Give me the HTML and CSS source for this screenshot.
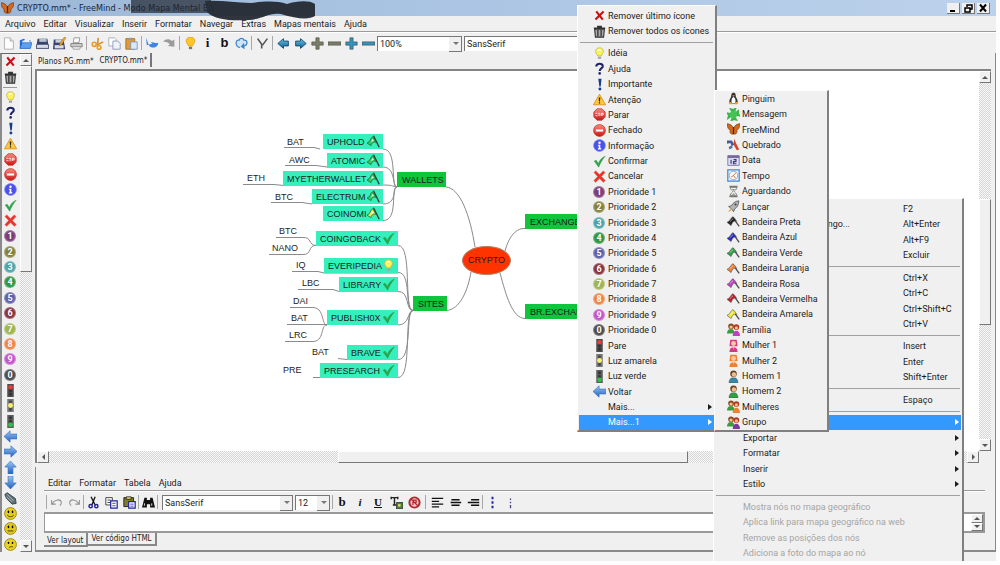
FILE: index.html
```html
<!DOCTYPE html>
<html lang="pt-BR">
<head>
    <meta charset="UTF-8">
    <meta name="viewport" content="width=device-width, initial-scale=1.0">
    <title>CRYPTO.mm* - FreeMind</title>
    <link rel="stylesheet" href="styles.css">
</head>
<body>
    <!-- Icon sprite -->
    <svg class="sprite" aria-hidden="true">
        <defs>
            <linearGradient id="gBlue" x1="0" y1="0" x2="0" y2="1"><stop offset="0" stop-color="#9cc8f4"/><stop offset="1" stop-color="#1f5fc0"/></linearGradient>
            <linearGradient id="gTeal" x1="0" y1="0" x2="0" y2="1"><stop offset="0" stop-color="#6cc6e8"/><stop offset="1" stop-color="#0f5f90"/></linearGradient>
            <linearGradient id="gRed" x1="0" y1="0" x2="0" y2="1"><stop offset="0" stop-color="#f98a80"/><stop offset="1" stop-color="#cc1414"/></linearGradient>
            <symbol id="remove" viewBox="0 0 16 16"><path d="M4 3l8 10M13 3L3 13" stroke="#c41212" stroke-width="2.6" fill="none"/></symbol>
            <symbol id="trash" viewBox="0 0 16 16"><path d="M1 4h14M5 2h6" stroke="#333" stroke-width="2"/><path d="M2 5h12l-1 10H3z" fill="#aaa" stroke="#333" stroke-width="1.400"/><path d="M6 6v8M10 6v8" stroke="#222" stroke-width="1.400"/></symbol>
            <symbol id="bulb" viewBox="0 0 16 16"><path d="M8 1C4.500 1 3 3.500 3.200 5.800 3.500 8 5.500 9 5.600 11h4.800c.1-2 2.200-3 2.400-5.200C13 3.500 11.500 1 8 1z" fill="#fbf35a" stroke="#c3b54a"/><path d="M6 4.500c1-1.500 3-1.500 3.500-.5" stroke="#fff" stroke-width="1.500" fill="none"/><path d="M6 12h4v2.500H6z" fill="#a5a5a5"/></symbol>
            <symbol id="bulb-orange" viewBox="0 0 16 16"><path d="M8 0C4 0 2.500 3 2.800 5.500 3 8 5.300 9 5.500 11h5c.2-2 2.500-3 2.700-5.500C13.500 3 12 0 8 0z" fill="#ffc629" stroke="#e09a10"/><path d="M6 12h4v3H6z" fill="#777"/></symbol>
            <symbol id="question" viewBox="0 0 16 16"><path d="M4 5.500C4 1 12.500 1 12 5.500 11.500 8 8.500 7.500 8.300 11" stroke="#1d2369" stroke-width="2.600" fill="none"/><circle cx="8.200" cy="14" r="1.600" fill="#1d2369"/></symbol>
            <symbol id="bang" viewBox="0 0 16 16"><path d="M6.500 1h4l-1 9.500H7.800z" fill="#173d86"/><circle cx="8.500" cy="13.600" r="1.800" fill="#173d86"/></symbol>
            <symbol id="warn" viewBox="0 0 16 16"><path d="M8 1.500L15.500 14.500H.5z" fill="#ffc83a" stroke="#d88b12"/><path d="M7 5.500h2l-.4 5H7.400zM7.200 11.500h1.600V13H7.200z" fill="#222"/></symbol>
            <symbol id="stop" viewBox="0 0 16 16"><path d="M5 1h6l4 4v6l-4 4H5l-4-4V5z" fill="url(#gRed)" stroke="#c33"/><path d="M3 6.500h2.500M3 9.500h2.500M6.500 6.500h2M7.500 6.500v3.500M10 9.800V6.500h2.500v2H10" stroke="#fff" fill="none"/></symbol>
            <symbol id="closed" viewBox="0 0 16 16"><circle cx="8" cy="8" r="7.300" fill="url(#gRed)" stroke="#d43a30"/><path d="M3.500 6.700h9v2.600h-9z" fill="#fff"/></symbol>
            <symbol id="info" viewBox="0 0 16 16"><circle cx="8" cy="8" r="7.300" fill="#4a50ee" stroke="#8b90ee"/><circle cx="8" cy="4.500" r="1.500" fill="#fff"/><path d="M6 7h3v4.500h1.200V13H6v-1.500h1V8.300H6z" fill="#fff"/></symbol>
            <symbol id="check" viewBox="0 0 16 16"><path d="M1.500 7.500L4 6.500l2.500 4C8.500 6 11 3 15 1.500 11.500 5.500 9 10 7 15z" fill="#2fa84a" stroke="#1b8a38" stroke-width=".5"/></symbol>
            <symbol id="cancel" viewBox="0 0 16 16"><path d="M1 3l2.500-2L8 5.500 12.500 1 15 3.200 10.500 8l4.800 5-2.500 2.500L8 10.800 3.200 15.500 1 13l4.500-5z" fill="#e6352c" stroke="#f08a80" stroke-width=".6"/></symbol>
            <symbol id="light-red" viewBox="0 0 16 16"><path d="M4 0h8v16H4z" fill="#4c4c4c"/><circle cx="8" cy="4" r="2.800" fill="#f03a3a"/><circle cx="8" cy="8.500" r="1.800" fill="#333"/><circle cx="8" cy="12.500" r="1.800" fill="#333"/></symbol>
            <symbol id="light-yellow" viewBox="0 0 16 16"><path d="M4 0h8v16H4z" fill="#777"/><circle cx="8" cy="3.500" r="1.800" fill="#444"/><circle cx="8" cy="8" r="3" fill="#f7f06a"/><circle cx="8" cy="12.800" r="1.800" fill="#444"/></symbol>
            <symbol id="light-green" viewBox="0 0 16 16"><path d="M4 0h8v16H4z" fill="#5c5c5c"/><circle cx="8" cy="3.500" r="1.800" fill="#333"/><circle cx="8" cy="8" r="1.800" fill="#333"/><circle cx="8" cy="12" r="2.900" fill="#35c04a"/></symbol>
            <symbol id="arrow-left" viewBox="0 0 16 16"><path d="M0 8l7.500-7v4H16v6H7.500v4z" fill="url(#gBlue)" stroke="#3a72bd" stroke-width=".8"/></symbol>
            <symbol id="arrow-right" viewBox="0 0 16 16"><path d="M16 8L8.500 1v4H0v6h8.500v4z" fill="url(#gBlue)" stroke="#3a72bd" stroke-width=".8"/></symbol>
            <symbol id="arrow-up" viewBox="0 0 16 16"><path d="M8 0l7 7.500h-4V16H5V7.500H1z" fill="url(#gBlue)" stroke="#3a72bd" stroke-width=".8"/></symbol>
            <symbol id="arrow-down" viewBox="0 0 16 16"><path d="M8 16l7-7.500h-4V0H5v8.500H1z" fill="url(#gBlue)" stroke="#3a72bd" stroke-width=".8"/></symbol>
            <symbol id="pencil" viewBox="0 0 16 16"><path d="M1 3l3-2 10 7 1 6-5 1L3 8z" fill="#5f7075" stroke="#2c3b40"/><path d="M4 3l8 8M3 6l7 6" stroke="#b9cccf"/></symbol>
            <symbol id="smile" viewBox="0 0 16 16"><circle cx="8" cy="8" r="7.300" fill="#e6cf1e" stroke="#8f7f0c"/><ellipse cx="5.500" cy="6" rx="1" ry="1.600"/><ellipse cx="10.500" cy="6" rx="1" ry="1.600"/><path d="M4 10c2 2.500 6 2.500 8 0" stroke="#222" fill="none"/></symbol>
            <symbol id="neutral" viewBox="0 0 16 16"><circle cx="8" cy="8" r="7.300" fill="#e0c91c" stroke="#8f7f0c"/><ellipse cx="5.500" cy="6" rx="1" ry="1.600"/><ellipse cx="10.500" cy="6" rx="1" ry="1.600"/><path d="M4.500 11h7" stroke="#222" fill="none"/></symbol>
            <symbol id="sad" viewBox="0 0 16 16"><circle cx="8" cy="8" r="7.300" fill="#e9d222" stroke="#8f7f0c"/><ellipse cx="5.500" cy="6" rx="1" ry="1.300"/><ellipse cx="10.500" cy="6" rx="1" ry="1.300"/><path d="M6 12c1-1 3-2 5-1" stroke="#222" fill="none"/></symbol>
            <symbol id="penguin" viewBox="0 0 16 16"><path d="M8 1c-3 0-2.500 3-3 5C3.500 8.500 2 11 3.500 14h9C14 11 12.500 8.500 11 6c-.5-2 0-5-3-5z" fill="#333"/><path d="M8 6c-2.500 1-3 5-2 7.500h4C11 11 10.500 7 8 6z" fill="#fff"/><path d="M6.500 4h3L8 6zM2 13l3-1 2 3H3zM14 13l-3-1-2 3h4z" fill="#f0a020"/></symbol>
            <symbol id="clover" viewBox="0 0 16 16"><path d="M8 8L4 1l4 1 3-2zM8 8l6-5v4l2 3zM8 8l4 7-4-1-3 2zM8 8l-7 5 1-4-2-3z" fill="#3bb54a" stroke="#3bb54a" stroke-width="1.500"/><circle cx="8" cy="8" r="4.500" fill="#45c455"/></symbol>
            <symbol id="butterfly" viewBox="0 0 16 16"><path d="M0 1c4 0 6 2 8 5 2-3 4-5 8-5-.5 5-2 7-4 8 1 3-1 6-4 4-3 2-5-1-4-4C2 8 .5 6 0 1z" fill="#d2691e" stroke="#7d3208" stroke-width=".8"/><path d="M8 5v9" stroke="#5a2408" stroke-width="1.600"/></symbol>
            <symbol id="broken" viewBox="0 0 16 16"><path d="M0 3h6l3 5-3 2-2-4-4 1z" fill="#3f5f9f"/><path d="M9 1l2 5 4 8-3 1-4-7z" fill="#d8422c"/><path d="M2 11l4-2 1 3-4 2z" fill="#56719f"/></symbol>
            <symbol id="calendar" viewBox="0 0 16 16"><path d="M1 2h14v12H1z" fill="#dfe0f4" stroke="#6a6a9c"/><path d="M1 2h14v3H1z" fill="#7a6a9c"/><path d="M5 7v5M8 7h3v2.500H8V12h3.500" stroke="#3b3b7c" stroke-width="1.500" fill="none"/></symbol>
            <symbol id="clock" viewBox="0 0 16 16"><path d="M1 1h14v14H1z" fill="#e8f2fc" stroke="#3f86d0" stroke-width="1.500"/><circle cx="8" cy="8" r="5" fill="#fff" stroke="#999"/><path d="M11 4.500L8 8l2.500 3.500M5 10l3-2" stroke="#b0522c" fill="none"/></symbol>
            <symbol id="hourglass" viewBox="0 0 16 16"><path d="M3 1h10v2H3zM3 13h10v2H3z" fill="#777"/><path d="M4 3h8c0 3-3 4-3 5s3 2 3 5H4c0-3 3-4 3-5S4 6 4 3z" fill="#eee" stroke="#777"/><path d="M6 5h4L8 7.500zM5.500 12L8 10l2.500 2z" fill="#998e6c"/></symbol>
            <symbol id="rocket" viewBox="0 0 16 16"><path d="M14.500 1C10 1.500 7 4 5.500 7L2 8l2 1.500L6.500 12 8 14.500 9.500 11C12.500 9 14.500 6 14.500 1z" fill="#b4b4b4" stroke="#555"/><circle cx="10.500" cy="5.500" r="1.300" fill="#444"/><path d="M1 15l3-4 1.500 1.500z" fill="#e59a30"/></symbol>
            <symbol id="flag" viewBox="0 0 16 16"><path d="M7 3l8 11" stroke="#4b4b4b" stroke-width="1.600"/><path d="M7 2c2 1 3 3 5 6-3-1.500-5 0-7 5L0 9c3-1 4-4 7-7z" fill="currentColor" stroke="#555" stroke-width=".8"/><path d="M3.500 8.500c1.500-1 2-3 4-4" stroke="#fff" fill="none" opacity=".6"/></symbol>
            <symbol id="node-flag" viewBox="0 0 16 16"><path d="M8 1l7 14" stroke="#333" stroke-width="1.600"/><path d="M7 2l4 7c-3-1-5 0-6 4L0 10c4-1 4-6 7-8z" fill="currentColor" stroke="#1b6a30"/><path d="M4.500 9.500c1-1 2-2 4-2L7 5C6 6 5.500 8 4.500 9.500z" fill="#e5fff0"/></symbol>
            <symbol id="woman" viewBox="0 0 16 16"><path d="M4 1h8l1 8H3z" fill="currentColor"/><circle cx="8" cy="5.500" r="3" fill="#f5c9a0"/><path d="M3 16c0-4 1.500-6 5-6s5 2 5 6z" fill="currentColor"/><path d="M7 10h2l-1 3z" fill="#f5c9a0"/></symbol>
            <symbol id="man" viewBox="0 0 16 16"><circle cx="8" cy="4.500" r="4" fill="#6a4420"/><circle cx="8.500" cy="5.500" r="2.700" fill="#f0bf90"/><path d="M2.500 16c0-4 1.500-6.500 5.500-6.500s5.500 2.500 5.500 6.500z" fill="currentColor" stroke="#444" stroke-width=".5"/></symbol>
            <symbol id="people" viewBox="0 0 16 16"><circle cx="5" cy="4" r="3.500" fill="#8a4b20"/><circle cx="11.500" cy="5" r="3.500" fill="#b3371e"/><circle cx="5" cy="5" r="2" fill="#f0c090"/><circle cx="11.500" cy="6" r="2" fill="#f0c090"/><path d="M0 13c0-4 2-5.500 5-5.500s4 2 4 5.500z" fill="#3b9b3f"/><path d="M7 16c0-4 2-6.500 4.500-6.500S16 12 16 16z" fill="currentColor"/></symbol>

            <!-- Toolbar -->
            <symbol id="new" viewBox="0 0 16 16"><path d="M3 1h7l4 4v10H3z" fill="#fdfdfd" stroke="#a5a5a5"/><path d="M10 1v4h4" fill="#ddd" stroke="#a5a5a5"/></symbol>
            <symbol id="open" viewBox="0 0 16 16"><path d="M1 4l5-2 2 2h6v10H1z" fill="#2a6fdd"/><path d="M4 5l8-3 2 6H4z" fill="#e9f1fb"/><path d="M1 14l3-7h12l-2 7z" fill="#5da2f2" stroke="#1c53ad" stroke-width=".7"/></symbol>
            <symbol id="save" viewBox="0 0 16 16"><path d="M2 2h12l2 12H0z" fill="#38426a"/><path d="M4 2h9v4H4z" fill="#b8bfd2"/><path d="M1 9h14l.8 5H.2z" fill="#d8dbe6" stroke="#38426a"/></symbol>
            <symbol id="save-as" viewBox="0 0 16 16"><path d="M1 3h12l2 12H0z" fill="#38426a"/><path d="M3 3h8v4H3z" fill="#c9cddc"/><path d="M2 10h11v4H2z" fill="#d8dbe6"/><path d="M14 0l2 1-6 9-2 1 .2-2.500z" fill="#f0ab28" stroke="#9a6412" stroke-width=".6"/></symbol>
            <symbol id="print" viewBox="0 0 16 16"><path d="M5 1h7l-1 6H4z" fill="#fff" stroke="#888"/><path d="M1 8h14v4H1z" fill="#c9c9c9" stroke="#777"/><path d="M3 12h10l-1 3H4z" fill="#eee" stroke="#999"/></symbol>
            <symbol id="cut" viewBox="0 0 16 16"><path d="M9 1L8 9M15 6L5 11" stroke="#d9902a" stroke-width="2"/><circle cx="4" cy="9" r="2.500" fill="none" stroke="#e69e2e" stroke-width="2"/><circle cx="10" cy="13" r="2.300" fill="none" stroke="#e69e2e" stroke-width="2"/></symbol>
            <symbol id="copy" viewBox="0 0 16 16"><path d="M1 1h7l2 2v8H1z" fill="#fff" stroke="#9aa2b5"/><path d="M6 5h6l3 3v7H6z" fill="#eef2fa" stroke="#8590ac"/></symbol>
            <symbol id="paste" viewBox="0 0 16 16"><path d="M1 2h11v13H1z" fill="#e09a38" stroke="#a5681c"/><path d="M4 1h5v3H4z" fill="#999"/><path d="M7 6h8v9H7z" fill="#dce8f8" stroke="#6d8fbe"/></symbol>
            <symbol id="undo" viewBox="0 0 16 16"><path d="M0 1l1 9 7-2-2.500-2C9 6 12 8 15 7c0 5-6 8-11 4" fill="#3c86e2"/></symbol>
            <symbol id="redo" viewBox="0 0 16 16"><path d="M0 6c3-4 8-4 11-1l3-2v9l-8-1 2.500-2C7 7 3 5 0 6z" fill="#9b9b9b"/></symbol>
            <symbol id="link" viewBox="0 0 16 16"><path d="M6 13C0 12 0 3 5 4c1-3 5-3 6 0 5-1 5 6 0 7" fill="#cfe4f8" stroke="#3c84c8" stroke-width="1.500"/><path d="M11 7l1 8-5-3z" fill="#3c84c8"/></symbol>
            <symbol id="filter" viewBox="0 0 16 16"><path d="M2 2l5 7v5M14 2L8 10" stroke="#555" stroke-width="2" fill="none"/></symbol>
            <symbol id="prev" viewBox="0 0 16 16"><path d="M1 8l7-6v3h6v6H8v3z" fill="url(#gTeal)" stroke="#0d3f66"/></symbol>
            <symbol id="next" viewBox="0 0 16 16"><path d="M15 8L8 2v3H2v6h6v3z" fill="url(#gTeal)" stroke="#0d3f66"/></symbol>
            <symbol id="plus" viewBox="0 0 16 16"><path d="M6 1h4v5h5v4h-5v5H6v-5H1V6h5z" fill="currentColor" stroke="#4d5144" stroke-width=".8"/></symbol>
            <symbol id="minus" viewBox="0 0 16 16"><path d="M0 6h16v4H0z" fill="currentColor" stroke="#4d5144" stroke-width=".8"/></symbol>

            <!-- Note editor -->
            <symbol id="ed-undo" viewBox="0 0 16 16"><path d="M2 5v5h5M2.500 9.500C6 4 13 3 14 8c0 2-1 3-2 4" stroke="#909090" stroke-width="1.300" fill="none"/></symbol>
            <symbol id="ed-redo" viewBox="0 0 16 16"><path d="M14 5v5H9M13.500 9.500C10 4 3 3 2 8c0 2 1 3 2 4" stroke="#909090" stroke-width="1.300" fill="none"/></symbol>
            <symbol id="ed-cut" viewBox="0 0 16 16"><path d="M5 1l5 10M10 1L6 11" stroke="#111" stroke-width="1.600"/><circle cx="4.500" cy="12.500" r="2" fill="none" stroke="#2222a0" stroke-width="1.800"/><circle cx="11.500" cy="12.500" r="2" fill="none" stroke="#2222a0" stroke-width="1.800"/></symbol>
            <symbol id="ed-copy" viewBox="0 0 16 16"><path d="M1 2h8v9H1z" fill="#fff" stroke="#222"/><path d="M3 5h4M3 8h4" stroke="#222"/><path d="M7 6h8v9H7z" fill="#fff" stroke="#2222a0" stroke-width="1.500"/><path d="M9 9h4M9 12h4" stroke="#2222a0"/></symbol>
            <symbol id="ed-paste" viewBox="0 0 16 16"><path d="M1 2h12v11H1z" fill="#7d7d2a" stroke="#111"/><path d="M4 1h6v3H4z" fill="#e8e04a" stroke="#222"/><path d="M7 7h8v8H7z" fill="#fff" stroke="#2222a0" stroke-width="1.500"/><path d="M9 10h4M9 12.500h4" stroke="#2222a0"/></symbol>
            <symbol id="find" viewBox="0 0 16 16"><path d="M3 2h3v3h4V2h3l3 12H10v-4H6v4H0z" fill="#111"/><path d="M3 9v3M12 9v3" stroke="#fff"/></symbol>
            <symbol id="text-color" viewBox="0 0 16 16"><path d="M1 2h9M5.500 2v9M3.500 11h4M1.500 1v3M9.500 1v3" stroke="#222" stroke-width="1.800" fill="none"/><path d="M8 8h8v8H8z" fill="#4d7a4f" stroke="#333"/><path d="M10 10h3v3h-3z" fill="#e5dc5a"/></symbol>
            <symbol id="no-style" viewBox="0 0 16 16"><circle cx="8" cy="8" r="6.300" fill="#f2c8c8" stroke="#b3262e" stroke-width="2.400"/><path d="M4 4l8 8M6 11V5h4v3H6" stroke="#b3262e" stroke-width="1.500" fill="none"/></symbol>
            <symbol id="al-left" viewBox="0 0 16 16"><path d="M1 3h14M1 6.500h9M1 10h14M1 13.500h9" stroke="#111" stroke-width="1.600"/></symbol>
            <symbol id="al-center" viewBox="0 0 16 16"><path d="M3 4.500h10M2 8h13M3 11.500h10" stroke="#111" stroke-width="1.800"/></symbol>
            <symbol id="al-right" viewBox="0 0 16 16"><path d="M5 4.500h10M1 8h14M5 11.500h10" stroke="#111" stroke-width="1.800"/></symbol>
            <symbol id="list" viewBox="0 0 16 16"><path d="M8 1v3M8 6.500v3M8 12v3" stroke="#2222a0" stroke-width="2.400"/></symbol>
            <symbol id="numlist" viewBox="0 0 16 16"><path d="M8 3v2M8 7v2M8 11v4" stroke="#444480" stroke-width="1.600"/></symbol>
        </defs>
    </svg>

    <div class="window">
        <header class="titlebar">
            <svg class="icon"><use href="#butterfly"/></svg>
            <span class="title">CRYPTO.mm* - FreeMind - Modo Mapa Mental E:\</span>
            <svg class="scribble" viewBox="0 0 184 22" aria-hidden="true"><path opacity=".75" d="M0 0H80V13H0z"/><path d="M74 1C90 0 104 3 120 3C136 1 146 1 156 4C166 1 178 0 184 4V16C178 20 166 19 150 14C138 12 132 19 118 20C100 21 84 20 76 12z"/></svg>
            <div class="window-buttons">
                <button aria-label="Minimizar"><svg viewBox="0 0 12 10"><path d="M3 8h5" stroke="#000" stroke-width="2"/></svg></button>
                <button aria-label="Restaurar"><svg viewBox="0 0 12 10"><path d="M5 4V2h5v4H8M3 5h5v4H3z" fill="none" stroke="#000" stroke-width="1.500"/></svg></button>
                <button aria-label="Fechar"><svg viewBox="0 0 12 10"><path d="M3 1.500l6 7M9 1.500l-6 7" stroke="#000" stroke-width="2"/></svg></button>
            </div>
        </header>

        <nav class="menubar">
            <button>Arquivo</button>
            <button>Editar</button>
            <button>Visualizar</button>
            <button>Inserir</button>
            <button>Formatar</button>
            <button>Navegar</button>
            <button>Extras</button>
            <button>Mapas mentais</button>
            <button>Ajuda</button>
        </nav>

        <div class="toolbar">
            <button aria-label="Novo"><svg class="icon"><use href="#new"/></svg></button>
            <button aria-label="Abrir"><svg class="icon"><use href="#open"/></svg></button>
            <button aria-label="Salvar"><svg class="icon"><use href="#save"/></svg></button>
            <button aria-label="Salvar como"><svg class="icon"><use href="#save-as"/></svg></button>
            <button aria-label="Imprimir"><svg class="icon"><use href="#print"/></svg></button>
            <span class="divider"></span>
            <button aria-label="Recortar"><svg class="icon"><use href="#cut"/></svg></button>
            <button aria-label="Copiar"><svg class="icon"><use href="#copy"/></svg></button>
            <button aria-label="Colar"><svg class="icon"><use href="#paste"/></svg></button>
            <span class="divider"></span>
            <button aria-label="Desfazer"><svg class="icon"><use href="#undo"/></svg></button>
            <button aria-label="Refazer"><svg class="icon"><use href="#redo"/></svg></button>
            <span class="divider"></span>
            <button aria-label="Ícone"><svg class="icon"><use href="#bulb-orange"/></svg></button>
            <button class="letter">i</button>
            <button class="letter sans">b</button>
            <button aria-label="Nuvem"><svg class="icon"><use href="#link"/></svg></button>
            <span class="divider"></span>
            <button aria-label="Filtro"><svg class="icon"><use href="#filter"/></svg></button>
            <span class="divider"></span>
            <button aria-label="Anterior"><svg class="icon"><use href="#prev"/></svg></button>
            <button aria-label="Próximo"><svg class="icon"><use href="#next"/></svg></button>
            <button class="olive" aria-label="Expandir tudo"><svg class="icon"><use href="#plus"/></svg></button>
            <button class="olive" aria-label="Recolher tudo"><svg class="icon"><use href="#minus"/></svg></button>
            <button class="teal" aria-label="Expandir nível"><svg class="icon"><use href="#plus"/></svg></button>
            <button class="teal" aria-label="Recolher nível"><svg class="icon"><use href="#minus"/></svg></button>
            <label class="combo zoom"><select aria-label="Zoom"><option>100%</option></select></label>
            <label class="combo font"><select aria-label="Fonte"><option>SansSerif</option></select></label>
        </div>

        <div class="workspace">
            <aside class="sidebar">
                <div class="icon-list">
                    <button aria-label="Remover último ícone"><svg class="icon"><use href="#remove"/></svg></button>
                    <button aria-label="Remover todos os ícones"><svg class="icon"><use href="#trash"/></svg></button>
                    <hr>
                    <button aria-label="Idéia"><svg class="icon"><use href="#bulb"/></svg></button>
                    <button aria-label="Ajuda"><svg class="icon"><use href="#question"/></svg></button>
                    <button aria-label="Importante"><svg class="icon"><use href="#bang"/></svg></button>
                    <button aria-label="Atenção"><svg class="icon"><use href="#warn"/></svg></button>
                    <button aria-label="Parar"><svg class="icon"><use href="#stop"/></svg></button>
                    <button aria-label="Fechado"><svg class="icon"><use href="#closed"/></svg></button>
                    <button aria-label="Informação"><svg class="icon"><use href="#info"/></svg></button>
                    <button aria-label="Confirmar"><svg class="icon"><use href="#check"/></svg></button>
                    <button aria-label="Cancelar"><svg class="icon"><use href="#cancel"/></svg></button>
                    <button><span class="num p1">1</span></button>
                    <button><span class="num p2">2</span></button>
                    <button><span class="num p3">3</span></button>
                    <button><span class="num p4">4</span></button>
                    <button><span class="num p5">5</span></button>
                    <button><span class="num p6">6</span></button>
                    <button><span class="num p7">7</span></button>
                    <button><span class="num p8">8</span></button>
                    <button><span class="num p9">9</span></button>
                    <button><span class="num p0">0</span></button>
                    <button aria-label="Pare"><svg class="icon"><use href="#light-red"/></svg></button>
                    <button aria-label="Luz amarela"><svg class="icon"><use href="#light-yellow"/></svg></button>
                    <button aria-label="Luz verde"><svg class="icon"><use href="#light-green"/></svg></button>
                    <button aria-label="Voltar"><svg class="icon"><use href="#arrow-left"/></svg></button>
                    <button aria-label="Avançar"><svg class="icon"><use href="#arrow-right"/></svg></button>
                    <button aria-label="Acima"><svg class="icon"><use href="#arrow-up"/></svg></button>
                    <button aria-label="Abaixo"><svg class="icon"><use href="#arrow-down"/></svg></button>
                    <button aria-label="Lápis"><svg class="icon"><use href="#pencil"/></svg></button>
                    <button aria-label="Feliz"><svg class="icon"><use href="#smile"/></svg></button>
                    <button aria-label="Neutro"><svg class="icon"><use href="#neutral"/></svg></button>
                    <button aria-label="Triste"><svg class="icon"><use href="#sad"/></svg></button>
                </div>
                <div class="scroll vertical">
                    <button class="up" aria-label="Subir"></button>
                    <span class="thumb side-thumb"></span>
                    <span class="track"></span>
                    <button class="down" aria-label="Descer"></button>
                </div>
            </aside>

            <main class="main">
                <div class="tabs">
                    <button>Planos PG.mm*</button>
                    <button class="active">CRYPTO.mm*</button>
                </div>

                <div class="map-frame">
                    <div class="canvas">
                        <svg class="edges" width="560" height="330" viewBox="37 71 560 330" aria-hidden="true">
                            <path d="M446 187C460 188 470 215 475 247M446 310.500C460 310 468 290 471 272M505 251C508 240 514 228 525 228.500M500 273C506 295 512 318 525 318.500"/>
                            <path d="M397 187C390 187 398 149 383 149M397 187C392 187 396 167 383 167M397 187C392 186 392 185 383 185M397 187C392 187 398 204 383 204M397 187C390 187 399 221 383 220.500H323"/>
                            <path d="M413 310.500C403 310 413 245 398 245.500M413 310.500C404 310 412 272 398 272.500M413 310.500C405 310 410 291 398 291.500M413 310.500C407 311 410 325 398 325M413 310.500C405 311 413 360 398 359.500M413 310.500C403 311 413 378 398 377.500"/>
                            <path d="M316 245.500C308 245 312 237 303 237.500H276M316 245.500C308 245 312 255 303 254.500H269M316 245.500H398"/>
                            <path d="M327 325C321 325 325 307 312 307.500H290M287 324.500H398M327 325C320 325 325 342 312 341.500H285"/>
                            <path d="M284 147.500H314L320 149M285 165.500H316L327 167M243 184.500H274L284 185.500M271 202.500H302L312 204M292 271.500H318L324 273H398M298 289.500H333L339 291.500H398M338 358.500L347 359.500H398M313 377.500H398"/>
                        </svg>

                        <span class="leaf bat">BAT</span>
                        <span class="leaf awc">AWC</span>
                        <span class="leaf eth">ETH</span>
                        <span class="leaf btc">BTC</span>
                        <span class="leaf btc2">BTC</span>
                        <span class="leaf nano">NANO</span>
                        <span class="leaf iq">IQ</span>
                        <span class="leaf lbc">LBC</span>
                        <span class="leaf dai">DAI</span>
                        <span class="leaf bat2">BAT</span>
                        <span class="leaf lrc">LRC</span>
                        <span class="leaf bat3">BAT</span>
                        <span class="leaf pre">PRE</span>

                        <div class="node uphold">UPHOLD <svg class="icon flag-g"><use href="#node-flag"/></svg></div>
                        <div class="node atomic">ATOMIC <svg class="icon flag-g"><use href="#node-flag"/></svg></div>
                        <div class="node myether">MYETHERWALLET <svg class="icon flag-g"><use href="#node-flag"/></svg></div>
                        <div class="node electrum">ELECTRUM <svg class="icon flag-g"><use href="#node-flag"/></svg></div>
                        <div class="node coinomi">COINOMI <svg class="icon flag-y"><use href="#node-flag"/></svg></div>
                        <div class="node coingoback">COINGOBACK <svg class="icon"><use href="#check"/></svg></div>
                        <div class="node everipedia">EVERIPEDIA <svg class="icon"><use href="#bulb"/></svg></div>
                        <div class="node library">LIBRARY <svg class="icon"><use href="#check"/></svg></div>
                        <div class="node publish">PUBLISH0X <svg class="icon"><use href="#check"/></svg></div>
                        <div class="node brave">BRAVE <svg class="icon"><use href="#check"/></svg></div>
                        <div class="node presearch">PRESEARCH <svg class="icon"><use href="#check"/></svg></div>
                        <div class="node green wallets">WALLETS</div>
                        <div class="node green sites">SITES</div>
                        <div class="node green exchange">EXCHANGE</div>
                        <div class="node green br">BR.EXCHANGE</div>
                        <div class="root">CRYPTO</div>
                    </div>
                    <div class="scroll vertical">
                        <button class="up" aria-label="Subir"></button>
                        <span class="track before-v"></span>
                        <span class="thumb map-thumb-v"></span>
                        <span class="track"></span>
                        <button class="down" aria-label="Descer"></button>
                    </div>
                    <div class="scroll horizontal">
                        <button class="left" aria-label="Esquerda"></button>
                        <span class="track before-h"></span>
                        <span class="thumb map-thumb-h"></span>
                        <span class="track"></span>
                        <button class="right" aria-label="Direita"></button>
                    </div>
                </div>

                <section class="editor">
                    <nav class="menubar">
                        <button>Editar</button>
                        <button>Formatar</button>
                        <button>Tabela</button>
                        <button>Ajuda</button>
                    </nav>
                    <div class="toolbar">
                        <span class="divider"></span>
                        <button aria-label="Desfazer"><svg class="icon"><use href="#ed-undo"/></svg></button>
                        <button aria-label="Refazer"><svg class="icon"><use href="#ed-redo"/></svg></button>
                        <span class="divider"></span>
                        <button aria-label="Recortar"><svg class="icon"><use href="#ed-cut"/></svg></button>
                        <button aria-label="Copiar"><svg class="icon"><use href="#ed-copy"/></svg></button>
                        <button aria-label="Colar"><svg class="icon"><use href="#ed-paste"/></svg></button>
                        <span class="divider"></span>
                        <button aria-label="Localizar"><svg class="icon"><use href="#find"/></svg></button>
                        <span class="divider"></span>
                        <label class="combo family"><select aria-label="Fonte"><option>SansSerif</option></select></label>
                        <label class="combo size"><select aria-label="Tamanho"><option>12</option></select></label>
                        <span class="divider"></span>
                        <button class="letter">b</button>
                        <button class="letter italic">i</button>
                        <button class="letter underline">U</button>
                        <button aria-label="Cor do texto"><svg class="icon"><use href="#text-color"/></svg></button>
                        <button aria-label="Limpar estilo"><svg class="icon"><use href="#no-style"/></svg></button>
                        <span class="divider wide"></span>
                        <button aria-label="Esquerda"><svg class="icon"><use href="#al-left"/></svg></button>
                        <button aria-label="Centro"><svg class="icon"><use href="#al-center"/></svg></button>
                        <button aria-label="Direita"><svg class="icon"><use href="#al-right"/></svg></button>
                        <span class="divider"></span>
                        <button aria-label="Lista"><svg class="icon"><use href="#list"/></svg></button>
                        <button aria-label="Lista numerada"><svg class="icon"><use href="#numlist"/></svg></button>
                    </div>
                    <div class="note">
                        <textarea aria-label="Nota"></textarea>
                        <div class="spinner">
                            <button class="up" aria-label="Subir"></button>
                            <button class="down" aria-label="Descer"></button>
                        </div>
                    </div>
                    <div class="view-tabs">
                        <button class="active">Ver layout</button>
                        <button>Ver código HTML</button>
                    </div>
                </section>
            </main>
        </div>

        <!-- Node context menu -->
        <ul class="popup context-menu">
            <li><button><kbd>F2</kbd></button></li>
            <li><button><span class="label-end">longo...</span><kbd>Alt+Enter</kbd></button></li>
            <li><button><kbd>Alt+F9</kbd></button></li>
            <li><button><kbd>Excluir</kbd></button></li>
            <li class="sep"></li>
            <li><button><kbd>Ctrl+X</kbd></button></li>
            <li><button><kbd>Ctrl+C</kbd></button></li>
            <li><button><kbd>Ctrl+Shift+C</kbd></button></li>
            <li><button><kbd>Ctrl+V</kbd></button></li>
            <li class="sep"></li>
            <li><button><kbd>Insert</kbd></button></li>
            <li><button><kbd>Enter</kbd></button></li>
            <li><button><kbd>Shift+Enter</kbd></button></li>
            <li class="sep"></li>
            <li><button><kbd>Espaço</kbd></button></li>
            <li class="sep"></li>
            <li><button class="selected more" aria-label="Ícones"></button></li>
            <li><button class="more">Exportar</button></li>
            <li><button class="more">Formatar</button></li>
            <li><button class="more">Inserir</button></li>
            <li><button class="more">Estilo</button></li>
            <li class="sep"></li>
            <li><button disabled>Mostra nós no mapa geográfico</button></li>
            <li><button disabled>Aplica link para mapa geográfico na web</button></li>
            <li><button disabled>Remove as posições dos nós</button></li>
            <li><button disabled>Adiciona a foto do mapa ao nó</button></li>
        </ul>

        <ul class="popup icon-menu">
            <li><button><svg class="icon"><use href="#remove"/></svg>Remover último ícone</button></li>
            <li><button><svg class="icon"><use href="#trash"/></svg>Remover todos os ícones</button></li>
            <li class="sep"></li>
            <li><button><svg class="icon"><use href="#bulb"/></svg>Idéia</button></li>
            <li><button><svg class="icon"><use href="#question"/></svg>Ajuda</button></li>
            <li><button><svg class="icon"><use href="#bang"/></svg>Importante</button></li>
            <li><button><svg class="icon"><use href="#warn"/></svg>Atenção</button></li>
            <li><button><svg class="icon"><use href="#stop"/></svg>Parar</button></li>
            <li><button><svg class="icon"><use href="#closed"/></svg>Fechado</button></li>
            <li><button><svg class="icon"><use href="#info"/></svg>Informação</button></li>
            <li><button><svg class="icon"><use href="#check"/></svg>Confirmar</button></li>
            <li><button><svg class="icon"><use href="#cancel"/></svg>Cancelar</button></li>
            <li><button><span class="num p1">1</span>Prioridade 1</button></li>
            <li><button><span class="num p2">2</span>Prioridade 2</button></li>
            <li><button><span class="num p3">3</span>Prioridade 3</button></li>
            <li><button><span class="num p4">4</span>Prioridade 4</button></li>
            <li><button><span class="num p5">5</span>Prioridade 5</button></li>
            <li><button><span class="num p6">6</span>Prioridade 6</button></li>
            <li><button><span class="num p7">7</span>Prioridade 7</button></li>
            <li><button><span class="num p8">8</span>Prioridade 8</button></li>
            <li><button><span class="num p9">9</span>Prioridade 9</button></li>
            <li><button><span class="num p0">0</span>Prioridade 0</button></li>
            <li><button><svg class="icon"><use href="#light-red"/></svg>Pare</button></li>
            <li><button><svg class="icon"><use href="#light-yellow"/></svg>Luz amarela</button></li>
            <li><button><svg class="icon"><use href="#light-green"/></svg>Luz verde</button></li>
            <li><button><svg class="icon"><use href="#arrow-left"/></svg>Voltar</button></li>
            <li><button class="more"><span class="icon"></span>Mais...</button></li>
            <li><button class="selected more"><span class="icon"></span>Mais...1</button></li>
        </ul>

        <ul class="popup more-menu">
            <li><button><svg class="icon"><use href="#penguin"/></svg>Pinguim</button></li>
            <li><button><svg class="icon"><use href="#clover"/></svg>Mensagem</button></li>
            <li><button><svg class="icon"><use href="#butterfly"/></svg>FreeMind</button></li>
            <li><button><svg class="icon"><use href="#broken"/></svg>Quebrado</button></li>
            <li><button><svg class="icon"><use href="#calendar"/></svg>Data</button></li>
            <li><button><svg class="icon"><use href="#clock"/></svg>Tempo</button></li>
            <li><button><svg class="icon"><use href="#hourglass"/></svg>Aguardando</button></li>
            <li><button><svg class="icon"><use href="#rocket"/></svg>Lançar</button></li>
            <li><button><svg class="icon c-black"><use href="#flag"/></svg>Bandeira Preta</button></li>
            <li><button><svg class="icon c-blue"><use href="#flag"/></svg>Bandeira Azul</button></li>
            <li><button><svg class="icon c-green"><use href="#flag"/></svg>Bandeira Verde</button></li>
            <li><button><svg class="icon c-orange"><use href="#flag"/></svg>Bandeira Laranja</button></li>
            <li><button><svg class="icon c-pink"><use href="#flag"/></svg>Bandeira Rosa</button></li>
            <li><button><svg class="icon c-red"><use href="#flag"/></svg>Bandeira Vermelha</button></li>
            <li><button><svg class="icon c-yellow"><use href="#flag"/></svg>Bandeira Amarela</button></li>
            <li><button><svg class="icon c-pink"><use href="#people"/></svg>Família</button></li>
            <li><button><svg class="icon c-rose"><use href="#woman"/></svg>Mulher 1</button></li>
            <li><button><svg class="icon c-orange"><use href="#woman"/></svg>Mulher 2</button></li>
            <li><button><svg class="icon c-teal"><use href="#man"/></svg>Homem 1</button></li>
            <li><button><svg class="icon c-green"><use href="#man"/></svg>Homem 2</button></li>
            <li><button><svg class="icon c-orange"><use href="#people"/></svg>Mulheres</button></li>
            <li><button><svg class="icon c-purple"><use href="#people"/></svg>Grupo</button></li>
        </ul>
    </div>
</body>
</html>
```

FILE: styles.css
```css
* {
    box-sizing: border-box;
}
body {
    margin: 0;
    background-color: #fdfdfd;
    font-family: Roboto, "Liberation Sans", sans-serif;
    font-size: 9px;
    color: #1c1c1c;
}
button, select, textarea, kbd {
    font: inherit;
    color: inherit;
}
button {
    border: none;
    background: none;
    padding: 0;
    white-space: nowrap;
}
.sprite {
    position: absolute;
    width: 0;
    height: 0;
}
.icon {
    width: 13px;
    height: 13px;
    flex: none;
}
.window {
    position: relative;
    display: flex;
    flex-direction: column;
    min-height: calc(100vh - 5px);
    margin-right: 4px;
    padding-bottom: 9px;
    background-color: #f0f0f0;
}

/* Title bar */
.titlebar {
    position: relative;
    display: flex;
    align-items: center;
    gap: 3px;
    height: 16px;
    padding: 0 6px 0 1px;
    background: linear-gradient(90deg, #9db7d6, #a9c3e2 40%, #bcd2ec);
}
.title {
    font-family: "DejaVu Sans Condensed", "DejaVu Sans", sans-serif;
    color: #17253a;
}
.scribble {
    position: absolute;
    left: 131px;
    top: 0;
    width: 184px;
    height: 22px;
    fill: #20262e;
    opacity: 0.92;
}
.window-buttons {
    display: flex;
    gap: 2px;
    margin-left: auto;
}
.window-buttons button {
    width: 13px;
    height: 11px;
    background-color: #f0f0f0;
    border-right: 1px solid #777;
    border-bottom: 1px solid #777;
}
.window-buttons svg {
    display: block;
    width: 12px;
    height: 10px;
}

/* Menus and toolbars */
.menubar {
    display: flex;
    align-items: center;
    gap: 8px;
    height: 16px;
    padding-left: 5px;
    border-bottom: 1px solid #9a9a9a;
}
.toolbar {
    display: flex;
    align-items: center;
    height: 21px;
    border-top: 1px solid #fff;
}
.toolbar button {
    display: flex;
    justify-content: center;
    width: 17px;
}
.toolbar .letter {
    font-family: "Liberation Serif", serif;
    font-size: 13px;
    font-weight: bold;
    line-height: 14px;
    color: #111;
}
.toolbar .sans {
    font-family: "Liberation Sans", sans-serif;
}
.toolbar .italic {
    font-style: italic;
    font-size: 11px;
}
.toolbar .underline {
    font-size: 11px;
    text-decoration: underline;
}
.divider {
    width: 1px;
    height: 14px;
    margin: 0 2px 0 1px;
    background-color: #a8a8a8;
}
.olive {
    color: #7b7d68;
}
.teal {
    color: #2f93c4;
}
.combo {
    position: relative;
    height: 15px;
    margin-right: 2px;
    background-color: #fff;
    border-top: 1px solid #777;
    border-left: 1px solid #777;
}
.combo select {
    display: block;
    width: 100%;
    height: 14px;
    padding: 0 2px;
    border: none;
    background: none;
    appearance: none;
}
.combo::before {
    content: "";
    position: absolute;
    right: 0;
    top: 0;
    width: 12px;
    height: 14px;
    background-color: #f0f0f0;
    border-right: 1px solid #777;
    border-bottom: 1px solid #777;
}
.combo::after {
    content: "";
    position: absolute;
    right: 3px;
    top: 5px;
    border: 3px solid transparent;
    border-top-color: #777;
    border-bottom: none;
}
.combo.zoom {
    width: 85px;
}
.combo.font {
    width: 200px;
}
.combo.family {
    width: 131px;
    margin-left: 4px;
}
.combo.size {
    width: 35px;
}

/* Scroll bars */
.scroll {
    display: flex;
}
.vertical {
    flex-direction: column;
    width: 12px;
}
.track {
    flex: 1;
    background: conic-gradient(#d4d4d4 25%, #fafafa 0 50%, #d4d4d4 0 75%, #fafafa 0) 0 0 / 2px 2px;
}
.thumb, .scroll button, .spinner button {
    flex: none;
    background-color: #f0f0f0;
    border: 1px solid #fff;
    border-right-color: #777;
    border-bottom-color: #777;
}
.scroll button, .spinner button {
    position: relative;
    width: 12px;
    height: 12px;
}
.scroll button::after, .spinner button::after {
    content: "";
    display: block;
    width: 0;
    margin: auto;
    border: 3px solid transparent;
}
.scroll .up::after, .spinner .up::after {
    border-top: none;
    border-bottom-color: #555;
}
.scroll .down::after, .spinner .down::after {
    border-bottom: none;
    border-top-color: #555;
}
.scroll .left::after {
    border-left: none;
    border-right-color: #555;
}
.scroll .right::after {
    border-right: none;
    border-left-color: #555;
}
.side-thumb {
    height: 206px;
}
.before-v {
    flex: none;
    height: 116px;
}
.map-thumb-v {
    height: 126px;
}
.before-h {
    flex: none;
    width: 289px;
}
.map-thumb-h {
    width: 350px;
}

/* Workspace */
.workspace {
    flex: 1;
    display: flex;
    gap: 3px;
}
.sidebar {
    display: flex;
    width: 32px;
    border-top: 1px solid #666;
    border-left: 2px solid #8a8a8a;
}
.icon-list {
    flex: 1;
    display: flex;
    flex-direction: column;
}
.icon-list button {
    flex: 1;
    display: flex;
    align-items: center;
    justify-content: center;
    padding-right: 1px;
    line-height: 12px;
}
.icon-list hr {
    width: 14px;
    height: 1px;
    margin: 2px 1px;
    border: none;
    background-color: #999;
}
.num {
    flex: none;
    width: 12px;
    height: 12px;
    margin-right: 1px;
    border-radius: 50%;
    font-weight: bold;
    line-height: 12px;
    text-align: center;
    color: #fff;
    box-shadow: inset 0 0 2px rgba(255, 255, 255, 0.9);
}
.p1 { background-color: #7c3c78; }
.p2 { background-color: #84803c; }
.p3 { background-color: #4aa3a8; }
.p4 { background-color: #2f9440; }
.p5 { background-color: #5f5fa8; }
.p6 { background-color: #84303c; }
.p7 { background-color: #9fb552; }
.p8 { background-color: #f08040; }
.p9 { background-color: #c452cc; }
.p0 { background-color: #4a4a4a; }

.main {
    flex: 1;
    display: flex;
    flex-direction: column;
    min-width: 0;
    border-right: 1px solid #888;
}
.tabs, .view-tabs {
    display: flex;
    align-items: flex-start;
    font-family: "DejaVu Sans Condensed", "DejaVu Sans", sans-serif;
    font-size: 8px;
}
.tabs {
    height: 16px;
}
.tabs button {
    height: 16px;
    padding: 0 3px;
}
.tabs .active {
    height: 14px;
    border-right: 2px solid #777;
}
.map-frame {
    flex: 1;
    display: grid;
    grid-template-columns: 1fr 12px;
    grid-template-rows: 1fr 12px;
    margin-right: 4px;
    border: 2px solid #848484;
    border-right: none;
    border-bottom: none;
}
.map-frame > .vertical {
    min-height: 0;
}

/* Mind map */
.canvas {
    position: relative;
    min-height: 380px;
    overflow: hidden;
    background-color: #fff;
    font-family: "Liberation Sans", Arial, sans-serif;
}
.edges {
    position: absolute;
    left: 0;
    top: 0;
    fill: none;
    stroke: #8a8a8a;
}
.leaf {
    position: absolute;
    line-height: 10px;
}
.node {
    position: absolute;
    display: flex;
    align-items: center;
    justify-content: space-between;
    height: 15px;
    padding: 0 3px 0 4px;
    background-color: #35f0bc;
    white-space: nowrap;
}
.node.green {
    background-color: #10c43c;
    padding: 0 5px;
}
.flag-g { color: #3fc860; }
.flag-y { color: #f0e84a; }
.bat { left: 250px; top: 66px; }
.awc { left: 252px; top: 84px; }
.eth { left: 210px; top: 102px; }
.btc { left: 238px; top: 121px; }
.btc2 { left: 242px; top: 155px; }
.nano { left: 235px; top: 172px; }
.iq { left: 259px; top: 189px; }
.lbc { left: 265px; top: 207px; }
.dai { left: 256px; top: 225px; }
.bat2 { left: 254px; top: 242px; }
.lrc { left: 252px; top: 259px; }
.bat3 { left: 275px; top: 276px; }
.pre { left: 246px; top: 294px; }
.uphold { left: 286px; top: 63px; width: 60px; }
.atomic { left: 290px; top: 82px; width: 56px; }
.myether { left: 246px; top: 100px; width: 100px; }
.electrum { left: 275px; top: 118px; width: 71px; }
.coinomi { left: 286px; top: 135px; width: 60px; }
.coingoback { left: 279px; top: 160px; width: 82px; }
.everipedia { left: 287px; top: 187px; width: 74px; }
.library { left: 302px; top: 206px; width: 59px; }
.publish { left: 290px; top: 239px; width: 71px; }
.brave { left: 310px; top: 274px; width: 51px; }
.presearch { left: 283px; top: 292px; width: 78px; }
.wallets { left: 360px; top: 101px; width: 49px; }
.sites { left: 376px; top: 225px; width: 34px; }
.exchange { left: 488px; top: 143px; }
.br { left: 488px; top: 233px; }
.root {
    position: absolute;
    left: 425px;
    top: 175px;
    width: 49px;
    height: 29px;
    border: 1px solid #b08060;
    border-radius: 50%;
    background-color: #ff3300;
    line-height: 27px;
    text-align: center;
}

/* Note editor */
.editor {
    margin-top: 4px;
    padding: 8px 10px 3px 8px;
    border-left: 1px solid #888;
    border-bottom: 2px solid #8a8a8a;
}
.editor .menubar {
    padding-left: 4px;
}
.editor .toolbar {
    padding-left: 2px;
}
.editor .toolbar button {
    width: 18px;
}
.editor .divider {
    margin: 0;
}
.editor .wide {
    margin: 0 2px;
}
.note {
    display: flex;
    height: 21px;
    border: 2px solid #999;
    border-left-width: 1px;
}
.note textarea {
    flex: 1;
    padding: 0;
    border: none;
    background-color: #fff;
    resize: none;
}
.spinner {
    display: flex;
    flex-direction: column;
}
.spinner button {
    flex: 1;
}
.view-tabs button {
    height: 13px;
    padding: 0 3px;
    border-right: 2px solid #888;
    border-bottom: 2px solid #888;
}
.view-tabs .active {
    height: 14px;
    padding-top: 2px;
}

/* Popup menus */
.popup {
    position: absolute;
    display: flex;
    flex-direction: column;
    margin: 0;
    padding: 2px 1px 0;
    list-style: none;
    background-color: #f0f0f0;
    border: 1px solid #fff;
    border-right: 2px solid #808080;
    border-bottom: 2px solid #808080;
}
.popup li {
    flex: 1;
    display: flex;
}
.popup .sep {
    flex: none;
    height: 1px;
    margin: 3px 1px;
    background-color: #a0a0a0;
}
.popup button {
    position: relative;
    flex: 1;
    display: flex;
    align-items: center;
    gap: 2px;
}
.popup button:disabled {
    color: #a5a5a5;
}
.popup .selected {
    background-color: #3399ff;
    color: #fff;
}
.popup .more::after {
    content: "";
    position: absolute;
    right: 2px;
    border: 3px solid transparent;
    border-left: 4px solid currentColor;
    border-right: none;
}
.popup kbd {
    position: absolute;
    left: 188px;
}
.context-menu {
    left: 713px;
    top: 198px;
    width: 251px;
    height: 363px;
    border-bottom: none;
}
.context-menu button {
    padding-left: 28px;
}
.context-menu .label-end {
    width: 107px;
    text-align: right;
}
.icon-menu {
    left: 577px;
    top: 5px;
    width: 140px;
    height: 427px;
}
.icon-menu button {
    padding-left: 14px;
}
.more-menu {
    left: 714px;
    top: 90px;
    width: 115px;
    height: 342px;
    padding-top: 0;
}
.more-menu button {
    padding-left: 11px;
}
.c-black { color: #222; }
.c-blue { color: #2a2ac0; }
.c-green { color: #2fa040; }
.c-orange { color: #ee8030; }
.c-pink { color: #c040c0; }
.c-red { color: #c01c2c; }
.c-yellow { color: #f0ec30; }
.c-rose { color: #d83880; }
.c-teal { color: #3888a8; }
.c-purple { color: #7a3c9c; }
```
